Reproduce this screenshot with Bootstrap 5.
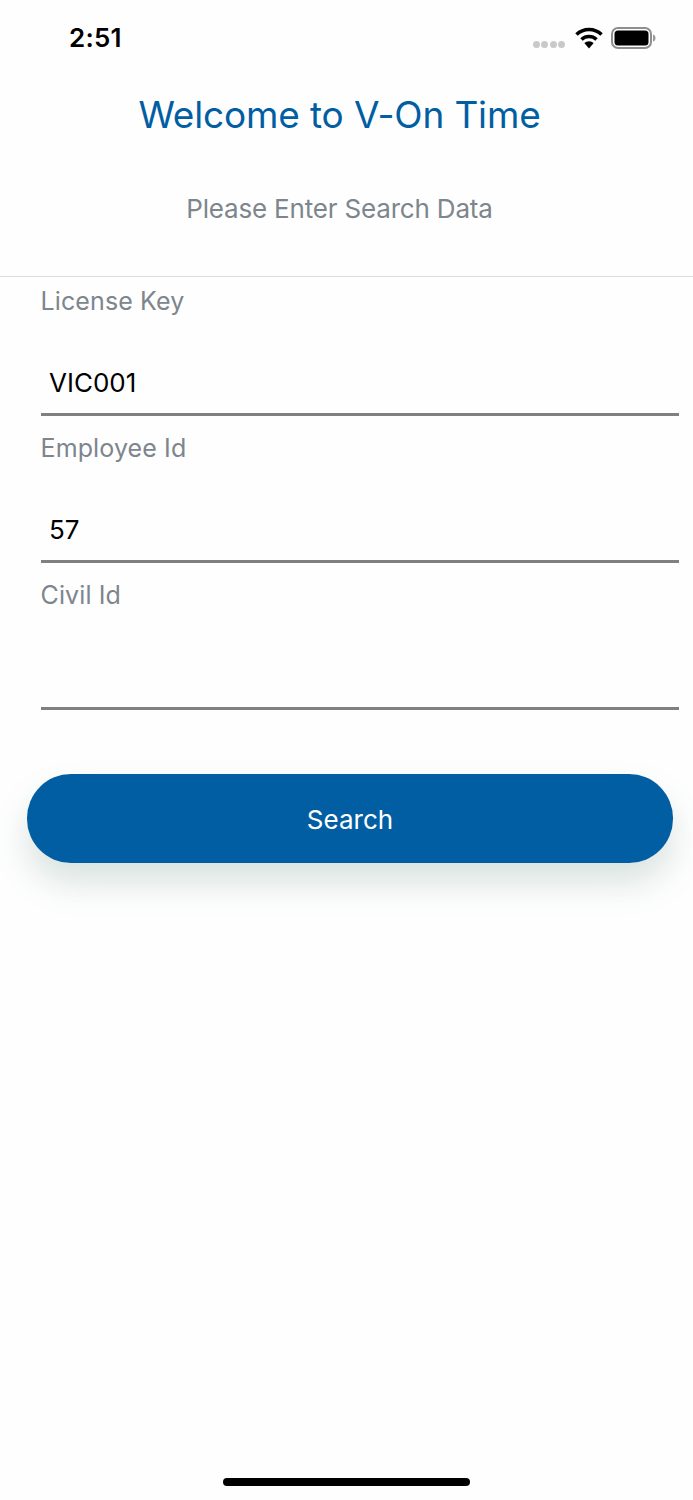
<!DOCTYPE html>
<html lang="en">
<head>
    <meta charset="UTF-8" />
    <meta name="viewport" content="width=device-width, initial-scale=1.0" />
    <title>V-On Time</title>
    <link href="https://cdn.jsdelivr.net/npm/bootstrap@5.3.0/dist/css/bootstrap.min.css" rel="stylesheet">
    <style>
        body { font-family: Inter, "Liberation Sans", sans-serif; background: #fefefe; }
        .phone-screen { width: 693px; height: 1500px; }
        .status-row { height: 75px; padding: 0 37px 0 69px; }
        .status-time { font-size: 26px; font-weight: 600; color: #000; letter-spacing: .2px; }
        .signal-dot { width: 7px; height: 7px; border-radius: 50%; background: #c9c9c9; }
        .signal-dots { gap: 1.4px; margin-top: 13px; margin-right: 10px; }
        .app-title { font-size: 37px; line-height: 44px; font-weight: 400; color: #015ea3; letter-spacing: -.15px; height: 100px; margin: 18px 0 0 -14px; }
        .app-sub { font-size: 26px; line-height: 32px; color: #7d858d; letter-spacing: -.18px; margin: 0 0 0 -14px; height: 83px; }
        .head-rule { border-bottom: 1px solid #dddddd; }
        .search-form { padding: 8px 14px 0 40.5px; }
        .field-block { height: 147px; }
        .field-label { font-size: 25px; line-height: 32px; color: #7d858d; letter-spacing: .12px; margin: 0; display: block; }
        .field-input.form-control { font-size: 26px; line-height: 32px; color: #000; font-family: inherit; height: 60px; margin-top: 39px; padding: 0 8.5px 5px; border: 0; border-bottom: 3px solid #808080; border-radius: 0; background: transparent; box-shadow: none; }
        .search-btn.btn { display: block; width: 646px; height: 89px; margin: 48px 0 0 27px; background: #015ea3; color: #fff; font-size: 26px; border: 0; border-radius: 44px / 44px; box-shadow: 0 20px 34px rgba(70, 120, 105, .2); padding: 1px 0 0; }
        .home-bar { width: 247px; height: 8px; border-radius: 4px; background: #000; position: absolute; left: 223px; top: 1478px; }
    </style>
</head>
<body>
<div class="phone-screen position-relative overflow-hidden">

    <!-- status bar -->
    <div class="status-row d-flex align-items-center justify-content-between">
        <span class="status-time">2:51</span>
        <div class="d-flex align-items-center">
            <div class="signal-dots d-flex">
                <span class="signal-dot"></span><span class="signal-dot"></span><span class="signal-dot"></span><span class="signal-dot"></span>
            </div>
            <svg class="me-2" width="28" height="22" viewBox="0 0 28 22">
                <path d="M1.5 7.5 A18 18 0 0 1 26.5 7.5" fill="none" stroke="#000" stroke-width="3.6"/>
                <path d="M6.5 12.5 A11 11 0 0 1 21.5 12.5" fill="none" stroke="#000" stroke-width="3.6"/>
                <path d="M14 21.5 L9.3 16 A7 7 0 0 1 18.7 16 Z" fill="#000"/>
            </svg>
            <svg width="45" height="22" viewBox="0 0 45 22">
                <rect x="1" y="1" width="39" height="20" rx="6" fill="none" stroke="#8e8e8e" stroke-width="2"/>
                <rect x="3.5" y="3.5" width="34" height="15" rx="3.5" fill="#000"/>
                <path d="M42 7.5 C44 8 44.5 9.5 44.5 11 C44.5 12.5 44 14 42 14.5 Z" fill="#9a9a9a"/>
            </svg>
        </div>
    </div>

    <!-- heading -->
    <div class="head-rule text-center">
        <h1 class="app-title">Welcome to V-On Time</h1>
        <p class="app-sub">Please Enter Search Data</p>
    </div>

    <!-- search form -->
    <form class="search-form">
        <div class="field-block">
            <label class="field-label" for="licenseKey">License Key</label>
            <input class="form-control field-input" id="licenseKey" type="text" value="VIC001">
        </div>
        <div class="field-block">
            <label class="field-label" for="employeeId">Employee Id</label>
            <input class="form-control field-input" id="employeeId" type="text" value="57">
        </div>
        <div class="field-block">
            <label class="field-label" for="civilId">Civil Id</label>
            <input class="form-control field-input" id="civilId" type="text" value="">
        </div>
    </form>
    <button type="button" class="btn search-btn">Search</button>

    <div class="home-bar"></div>
</div>
<script src="https://cdn.jsdelivr.net/npm/bootstrap@5.3.0/dist/js/bootstrap.bundle.min.js"></script>
</body>
</html>
